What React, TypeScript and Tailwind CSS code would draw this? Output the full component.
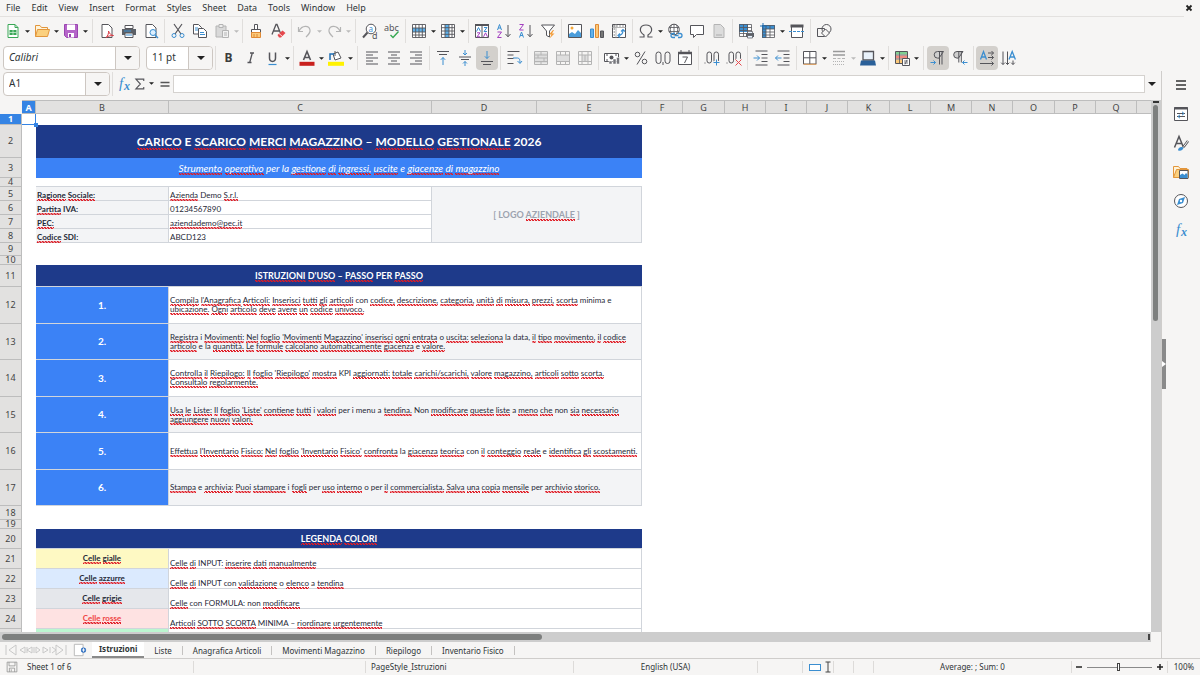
import { useState } from 'react'
import type { ReactNode } from 'react'

const menus = ['File', 'Edit', 'View', 'Insert', 'Format', 'Styles', 'Sheet', 'Data', 'Tools', 'Window', 'Help']
const sheets = ['Istruzioni', 'Liste', 'Anagrafica Articoli', 'Movimenti Magazzino', 'Riepilogo', 'Inventario Fisico']
const columns = 'ABCDEFGHIJKLMNOPQ'.split('')
const colWidths = [
  'w-[22px]', 'w-[14px]', 'w-[133px]', 'w-[263px]', 'w-[105px]', 'w-[105px]',
  'w-[41px]', 'w-[42px]', 'w-[41px]', 'w-[41px]', 'w-[41px]', 'w-[42px]',
  'w-[41px]', 'w-[41px]', 'w-[41px]', 'w-[42px]', 'w-[41px]', 'w-[41px]',
]

const K = '#55555a'
const B = '#3b8ed0'
const G = '#b4b4b4'

const sheetPage = <path d="M3 1.500h6.500l3.500 3.500v9.500h-10z" fill="#fff" stroke={K} />
const lines = (ys: number[], xs: [number, number][]) => (
  <path d={ys.map((y, i) => `M${xs[i % xs.length][0]} ${y}H${xs[i % xs.length][1]}`).join('')} stroke={K} />
)

// 16x16 toolbar glyphs
const icons: Record<string, ReactNode> = {
  new: <><path d="M3 1.500h7l3 3v10h-10z" fill="#fff" stroke="#3aa757" /><path d="M10 1.500v3h3" stroke="#3aa757" /><path d="M4.500 7h7v5h-7z" fill="#3aa757" /><path d="M4.500 9.500h7M8 7v5" stroke="#d8f3df" strokeWidth=".7" /></>,
  open: <><path d="M1.500 13.500v-11h4.500l1.500 2h6v3" fill="#fff3d8" stroke="#e2963c" /><path d="M1.500 13.500l2-7h12l-2 7z" fill="#fbd07e" stroke="#e2963c" /></>,
  save: <><path d="M1.500 1.500h13v13h-11l-2-2z" fill="#b565c9" stroke="#9a44b0" /><path d="M4 1.500h8v5.500h-8z" fill="#fff" /><path d="M5 10h6v4.500h-6z" fill="#fff" /><path d="M6 11h2v3h-2z" fill="#9a44b0" /></>,
  pdf: <>{sheetPage}<path d="M7 14.500c1.500-1 3-4.500 2.500-6.500c1 3 3 4.500 5 4.500c-3 0-5.500.500-7.500 2z" fill="#fff" stroke="#d93a44" /></>,
  print: <><path d="M4 2.500h8v3h-8z" fill="#fff" stroke={K} /><path d="M1 6h14v6h-14z" fill="#5b6067" /><path d="M4 10h8v4.500h-8z" fill="#fff" stroke={K} /><path d="M5 12h6" stroke={B} /><path d="M3 8h7" stroke={B} /></>,
  preview: <>{sheetPage}<circle cx="10" cy="9.500" r="3" fill="#dcefff" stroke={B} /><path d="M12 12l3 3" stroke={B} strokeWidth="1.500" /></>,
  cut: <><path d="M4 1l7 10M12 1l-7 10" stroke={K} strokeWidth="1.200" /><circle cx="4" cy="12.500" r="2" stroke={B} /><circle cx="12" cy="12.500" r="2" stroke={B} /></>,
  copy: <><path d="M1.500 1.500h5l3 3v6.500h-8z" fill="#fff" stroke={K} /><path d="M6.500 5.500h5l3 3v6h-8z" fill="#fff" stroke={K} /><path d="M3 5h3M3 7h3M8 9.500h4M8 11.500h5" stroke={B} /></>,
  paste: <><path d="M2 3h10v11h-10z" fill="#d9d9d9" stroke={G} /><path d="M5 1.500h4v3h-4z" fill="#eee" stroke={G} /><path d="M8.500 7.500h6v7h-6z" fill="#f2f2f2" stroke={G} /><path d="M10 10h3M10 12h3" stroke={G} /></>,
  clone: <><path d="M6.500 1.500h3v5h-3z" fill="#fff" stroke={K} /><path d="M3.500 6.500h9v3h-9z" fill="#fff" stroke={K} /><path d="M3.500 9.500h9v5h-9z" fill="#fbc97a" stroke="#e08a35" /><path d="M6 11v3M9 11v3" stroke="#e08a35" /></>,
  clear: <><path d="M2 11.500l4-10h1l4 10M3.500 8h6" stroke={K} strokeWidth="1.300" /><path d="M7.500 12l5-4.500l3 2.500l-4.500 4.500h-2z" fill="#e5484d" /><path d="M9 10.500l3.500 3" stroke="#fff" strokeWidth=".8" /></>,
  undo: <><path d="M1.500 4v4.500h4.500M2 8c3-6 10-6 11-1c.600 3-2 5-4 7" stroke={G} strokeWidth="1.200" /></>,
  redo: <><path d="M14.500 4v4.500h-4.500M14 8c-3-6-10-6-11-1c-.600 3 2 5 4 7" stroke={G} strokeWidth="1.200" /></>,
  find: <><circle cx="9" cy="6" r="4.800" fill="#fff" stroke={K} /><path d="M5.500 9.500l-4.500 5" stroke={K} strokeWidth="2" /><text x="6.500" y="8.500" fontSize="8" fill={B} fontFamily="Noto Sans">a</text><text x="10" y="15.500" fontSize="9" fill={K} fontFamily="Noto Sans">d</text></>,
  spell: <><text x="0" y="7.500" fontSize="9" fill={K} fontFamily="Noto Sans">abc</text><path d="M6.500 12l2.500 2.500l5.500-6" stroke="#36a852" strokeWidth="1.400" /></>,
  row: <><path d="M1.500 1.500h13v13h-13z" fill="#fff" /><path d="M1 5h14v4h-14z" fill="#5eb0ea" /><path d="M1.500 1.500h13v13h-13zM4.700 1.500v13M8 1.500v13M11.300 1.500v13M1.500 5h13M1.500 9h13M1.500 12h13" stroke={K} strokeWidth=".9" /></>,
  col: <><path d="M1.500 1.500h13v13h-13z" fill="#fff" /><path d="M5 1h4v14h-4z" fill="#5eb0ea" /><path d="M1.500 1.500h13v13h-13zM5 1.500v13M9 1.500v13M12 1.500v13M1.500 4.700h13M1.500 8h13M1.500 11.300h13" stroke={K} strokeWidth=".9" /></>,
  sort: <><path d="M1.500 1.500h13v13h-13z" fill="#fff" stroke={K} /><path d="M1 2h14" stroke={K} strokeWidth="2" /><path d="M8 2v12.500" stroke={K} /><path d="M2.500 8.500l2-4l2 4M10 4.500h3l-3 4h3" stroke={B} /><path d="M3 9.800h3l-3 4h3M9.500 13.800l2-4l2 4" stroke="#a33fc0" /></>,
  az: <><path d="M1.500 7l2-5.500l2 5.500M2 5h3" stroke={B} /><path d="M1.500 9h4l-4 5.500h4" stroke="#a33fc0" /><path d="M12 2v11.500M9.500 11l2.500 2.800l2.500-2.800" stroke={K} /></>,
  za: <><path d="M1.500 1.500h4l-4 5.500h4" stroke="#a33fc0" /><path d="M1.500 14.500l2-5.500l2 5.500M2 12.500h3" stroke={B} /><path d="M12 2v11.500M9.500 11l2.500 2.800l2.500-2.800" stroke={K} /></>,
  filter: <><path d="M1.500 2h13l-5 6v6l-3-1.500v-4.500z" fill="#fff" stroke={K} /><path d="M13 7l-4 4.500h2.500l-2 4l5-5h-2.500l2-3.500z" fill="#f39b36" /></>,
  image: <><path d="M1.500 1.500h13v13h-13z" fill="#fff" stroke={K} /><circle cx="5" cy="5" r="1.500" fill="#f3a73b" /><path d="M2 14v-3l3-2l3 2l3-4l3 3v4z" fill="#4a9ddb" /></>,
  chart: <><path d="M1.500 6h3v8.500h-3z" fill="#64b2ea" stroke={B} /><path d="M6.500 1.500h3v13h-3z" fill="#fbc97a" stroke="#e08a35" /><path d="M11.500 8h3v6.500h-3z" fill="#777" stroke={K} /></>,
  pivot: <><path d="M1.500 1.500h13v13h-13z" fill="#fff" stroke={K} /><path d="M1.500 4.500h13M5 1.500v13" stroke={G} /><path d="M2 3h12M3.200 2v12" stroke="#999" strokeDasharray="2 1" /><path d="M7 12.500c3 0 5-2 5-5.500M10 8.500l2-2l2 2M9 10.500l-2 2l2 2" stroke={B} strokeWidth="1.200" /></>,
  omega: <path d="M1.500 14h4.500v-2c-6-4-4-10 2-10s8 6 2 10v2h4.500" stroke={K} strokeWidth="1.200" />,
  link: <><circle cx="7" cy="6.500" r="5.300" fill="#fff" stroke={K} /><path d="M2 4.500h10M2 8.500h10M7 1v10M4.500 2c-1.500 3-1.500 6 0 9M9.500 2c1.500 3 1.500 6 0 9" stroke={K} strokeWidth=".8" /><path d="M8 10.500h-2a2 2 0 000 4h2M11 10.500h2a2 2 0 010 4h-2M7.500 12.500h4" stroke={B} strokeWidth="1.300" /></>,
  comment: <path d="M1.500 2.500h13v9h-7l-3 3v-3h-3z" fill="#fff" stroke={K} />,
  header: <><path d="M3 1.500h6.500l3.500 3.500v9.500h-10z" fill="#dcdcdc" stroke={G} /><path d="M5 11h6v2h-6z" fill="#c4c4c4" /></>,
  printArea: <><path d="M1.500 1.500h12v11h-12z" fill="#fff" /><path d="M1 1h9v8h-9z" fill={B} /><path d="M1.500 1.500h12v12h-12zM1.500 4.500h12M1.500 7.500h12M1.500 10.500h12M5.500 1.500v12M9.500 1.500v12" stroke={K} strokeWidth=".8" /><path d="M8 10h8v4h-8z" fill="#5b6067" /><path d="M9.500 8.500h5v2h-5zM9.500 12.500h5v2.500h-5z" fill="#e8f4ff" stroke={K} strokeWidth=".7" /></>,
  freeze: <><path d="M2.500 2.500h12v12h-12z" fill="#fff" /><path d="M2 2h13v4h-13zM2 2h4v13h-4z" fill={B} /><path d="M2.500 2.500h12v12h-12zM2.500 6h12M2.500 9h12M2.500 12h12M6 2.500v12M10 2.500v12" stroke={K} strokeWidth=".8" /><path d="M3 0v7M0 3h7" stroke="#1f6fb5" /></>,
  split: <><path d="M2.500 2.500h11v12h-11z" fill="#fff" stroke={K} /><path d="M1.500 3h13" stroke={K} strokeWidth="3" /><path d="M0 8.500h16" stroke={B} strokeDasharray="3 1" /></>,
  shapes: <><path d="M1.500 5.500h7v8h-7z" stroke={K} /><circle cx="10.500" cy="6" r="4.500" stroke={K} /><path d="M9.500 6l4 4l-4 4l-4-4z" fill="#f6f5f4" stroke={K} /></>,
  bold: <text x="3.500" y="12" fontSize="12" fontWeight="700" fill="#3c3c3c" fontFamily="Noto Sans">B</text>,
  italic: <path d="M7 3h4M4.500 12.500h4M9.300 3l-2.600 9.500" stroke={K} strokeWidth="1.300" />,
  underline: <><path d="M4.500 2.500v5.500c0 4.500 6 4.500 6 0v-5.500" stroke={K} strokeWidth="1.500" /><path d="M3.500 14.500h8" stroke={B} strokeWidth="1.200" /></>,
  fontColor: <><path d="M4.500 10l3.500-8.500l3.500 8.500M5.500 7.500h5" stroke={K} strokeWidth="1.600" /><path d="M.500 11.800h15v4h-15z" fill="#c9211e" /></>,
  highlight: <><path d="M5 4l5-2l3 6l-6 2z" fill="#fff" stroke={K} /><path d="M7 1v5" stroke={K} /><path d="M2 10v-6h4" stroke="#1f6fb5" strokeWidth="1.500" /><path d="M0 11.800h16v4h-16z" fill="#fff200" /></>,
  left: lines([2, 5, 8, 11, 14], [[2, 14], [2, 9]]),
  center: lines([2, 5, 8, 11, 14], [[2, 14], [5, 11]]),
  right: lines([2, 5, 8, 11, 14], [[2, 14], [7, 14]]),
  top: <>{lines([1.5, 4.5], [[2, 14], [4, 12]])}<path d="M8 15v-7.500M5.800 9.800l2.200-2.300l2.200 2.300" stroke={B} /></>,
  middle: <>{lines([7, 9.5], [[2, 14], [4, 12]])}<path d="M8 0v4.500M6 3l2 2l2-2M8 16v-4.500M6 13.500l2-2l2 2" stroke={B} /></>,
  bottom: <>{lines([11.5, 14.5], [[2, 14], [4, 12]])}<path d="M8 1v7.500M5.800 6.300l2.200 2.200l2.200-2.200" stroke={B} /></>,
  wrap: <><path d="M1.500 1.500h12M1.500 5h6M1.500 8.500h6M1.500 13.500h6" stroke={K} /><path d="M7 8h4.500c2 0 2.500 1.500 2.500 5M11.500 11l2.500 2.500l2-2.500" stroke={B} /></>,
  merge1: <><path d="M1.500 2.500h13v11h-13z" fill="#dedede" /><path d="M1.500 1.500h13v13h-13zM1.500 5h13M1.500 8h13M1.500 11.500h13M8 1.500v3.500M8 11.500v3M5 5v3M11 8v3" stroke={G} /></>,
  merge2: <><path d="M1.500 5h13v6.500h-13z" fill="#dedede" /><path d="M1.500 1.500h13v13h-13zM1.500 5h13M1.500 11.500h13M5.500 1.500v3.500M10.500 1.500v3.500M5.500 11.500v3M10.500 11.500v3" stroke={G} /></>,
  merge3: <><path d="M5 5h6v6.500h-6z" fill="#dedede" /><path d="M1.500 1.500h13v13h-13zM1.500 5h13M1.500 11.500h13M5 1.500v13M11 1.500v13M8 5v6.500" stroke={G} /></>,
  currency: <><path d="M.500 3.500h14v8h-14z" fill="#fff" stroke={K} /><circle cx="7.500" cy="7.500" r="2" fill={K} /><path d="M2 5h2M11 5h2M2 10h2" stroke={K} /><path d="M5 11h3v3h-3zM9 9h3v5h-3zM12.500 7.500h3v6.500h-3z" fill="#77777c" stroke="#fff" strokeWidth=".5" /></>,
  percent: <><circle cx="4.500" cy="4.500" r="2.300" stroke={K} /><circle cx="11.500" cy="11.500" r="2.300" stroke={K} /><path d="M12 1.500l-8 13" stroke={K} /></>,
  number: <><rect x="1" y="2" width="5" height="11.500" rx="2.500" stroke={K} /><rect x="10" y="2" width="5" height="11.500" rx="2.500" stroke={K} /><path d="M8 12v3" stroke={K} /></>,
  date: <><path d="M1.500 3h13v11.500h-13z" fill="#fff" stroke={K} /><path d="M1 3h14" stroke={K} strokeWidth="2.500" /><path d="M4 0v3M12 0v3" stroke={K} /><path d="M5.500 7h5l-3 6" stroke={K} /></>,
  addDec: <><path d="M.500 13h1" stroke={K} /><rect x="3" y="2" width="4.500" height="11" rx="2.200" stroke={K} /><rect x="10" y="2" width="4.500" height="11" rx="2.200" stroke={K} /><path d="M9.500 12.500h6M12.500 9.500v6" stroke="#f6f5f4" strokeWidth="3" /><path d="M9.500 12.500h6M12.500 9.500v6" stroke={B} /></>,
  delDec: <><path d="M.500 13h1" stroke={K} /><rect x="3" y="2" width="4.500" height="11" rx="2.200" stroke={K} /><rect x="10" y="2" width="4.500" height="11" rx="2.200" stroke={K} /><path d="M9.500 9.500l6 6M15.500 9.500l-6 6" stroke="#f6f5f4" strokeWidth="3" /><path d="M9.500 9.500l6 6M15.500 9.500l-6 6" stroke="#e5484d" /></>,
  indent: <><path d="M2.500 1h12M8.500 4.500h6M8.500 8h6M8.500 11.500h6M2.500 15h12" stroke={K} /><path d="M.500 8h6M4 5.500l2.500 2.500l-2.500 2.500" stroke={B} /></>,
  outdent: <><path d="M2.500 1h12M8.500 4.500h6M8.500 8h6M8.500 11.500h6M2.500 15h12" stroke={K} /><path d="M.500 8h6M3 5.500l-2.500 2.500l2.500 2.500" stroke={B} /></>,
  borders: <><path d="M1.500 1.500h12.500v12.500h-12.500zM7.800 1.500v12.500M1.500 7.800h12.500" fill="#fff" stroke={K} /><path d="M1.500 14.300h13" stroke="#e5a25c" /></>,
  lineStyle: <><path d="M2 1.500h12M2 5h12" stroke="#999" strokeWidth="1.600" /><path d="M2 8.500h12" stroke={G} strokeDasharray="3 1.500" /><path d="M2 11.500h12M2 14.500h12" stroke={G} strokeDasharray="1 1" /></>,
  lineColor: <><path d="M3 1.500h10.500v8.500h-10.500z" fill="#e8f1fa" stroke={K} strokeWidth="1.300" /><path d="M1 10.500h14l1 5h-16z" fill="#2a6099" /></>,
  conditional: <><path d="M1.500 1.500h12v12h-12z" fill="#fff" stroke={K} /><path d="M2 2h11v2.500h-11z" fill="#7fcf92" /><path d="M2 5.500h11v3h-11z" fill="#f08a80" /><path d="M2 9.500h6v3.500h-6z" fill="#fbc97a" /><path d="M5.500 1.500v12M1.500 5h12M1.500 9h12" stroke={K} strokeWidth=".8" /><path d="M8.500 8.500h7v7h-7z" fill="#fff" stroke={K} /><path d="M10 11h4M10 13h4M13 9.800l-2 4.600" stroke={K} strokeWidth=".8" /></>,
  ltr: <><path d="M13.500 1.500h-6a3.300 3.300 0 000 6.600h1.500zM9.500 1.500v13M12 1.500v13" fill="#cfcfcf" stroke={K} /><path d="M.500 12.500h5M3.500 10.500l2 2l-2 2" stroke={B} /></>,
  rtl: <><path d="M11 1.500h-6a3.300 3.300 0 000 6.600h1.500zM6.800 1.500v11M9.300 1.500v11" fill="#cfcfcf" stroke={K} /><path d="M15.500 12.500h-5M12.500 10.500l-2 2l2 2" stroke={B} /></>,
  textH: <><path d="M1.500 9.500l3-8l3 8M2.500 7h4" stroke={B} strokeWidth="1.300" /><path d="M9 3h5.500M12.500 1l2 2l-2 2M9 7.500h5.500M12.500 5.500l2 2l-2 2M1 13.500h13.500M12.500 11.500l2 2l-2 2" stroke={K} /></>,
  textV: <><path d="M8 9.500l3.200-8l3.200 8M9 7h4.500" stroke={B} strokeWidth="1.300" /><path d="M2 1.500v13M.200 12.700l1.800 1.800l1.800-1.800M6.500 1.500v13M4.700 12.700l1.800 1.800l1.800-1.800M12 10.500v4M10.200 12.700l1.800 1.800l1.800-1.800" stroke={K} /></>,
  sigma: <path d="M13 4v-2.500h-10.500l6 6.500l-6 6.500h10.500v-2.500" stroke={K} strokeWidth="1.500" />,
  equals: <path d="M2 6h12M2 10.500h12" stroke="#555" strokeWidth="2" />,
  fx: <><text x="3" y="12" fontSize="15" fontStyle="italic" fill={B} fontFamily="Liberation Serif">f</text><text x="8" y="14" fontSize="12" fontStyle="italic" fontWeight="700" fill={B} fontFamily="Liberation Serif">x</text></>,
  burger: <path d="M3 4h10M3 8h10M3 12h10" stroke="#333" strokeWidth="1.500" />,
  properties: <><path d="M1.500 1.500h13v13h-13z" fill="#fff" stroke={K} /><path d="M1 2.500h14" stroke={K} strokeWidth="2" /><path d="M4 7.500h8M4 10.500h8" stroke={K} /><path d="M9 5.800l2 1.700l-2 1.700M7 8.800l-2 1.700l2 1.700" stroke={B} /></>,
  styles: <><path d="M1.500 12.500l4.500-11l4.500 11M3.200 8.500h5.500" stroke={K} strokeWidth="1.500" /><path d="M15 6l-4.500 6" stroke={K} strokeWidth="2.500" /><path d="M14.800 6.200l-4 5.400" stroke="#fff" strokeWidth="1" /><path d="M5 15.500c0-3 3-4.500 5.500-3c0 2.500-2.500 3.500-5.500 3z" fill={B} /></>,
  gallery: <><path d="M.500 13.500v-11h5l1.500 2h7v3" fill="#fff3d8" stroke="#e2963c" /><path d="M.500 13.500l3-8h12v8z" fill="#fbd07e" stroke="#e2963c" /><path d="M6.500 6.500h8.500v8h-8.500z" fill="#fff" stroke={K} /><path d="M7 14v-3l2.500-1.500l2 1.500l1.500-2l1.500 1.500v3.500z" fill={B} /></>,
  navigator: <><circle cx="8" cy="8" r="6.500" fill="#fff" stroke={K} /><path d="M12 4l-2 6l-6 2l2-6z" fill={B} /><circle cx="8" cy="8" r="1.200" fill="#fff" /></>,
}

const Icon = ({ name, small }: { name: string; small?: boolean }) => (
  <svg viewBox="0 0 16 16" fill="none" className={small ? 'h-3 w-3' : 'h-4 w-4 overflow-visible'} aria-hidden="true">{icons[name]}</svg>
)

const Tool = ({ name, active }: { name: string; active?: boolean }) => (
  <button aria-label={name} className={`flex h-6 w-[22px] shrink-0 items-center justify-center rounded-sm ${active ? 'bg-[#d3d0cc]' : ''}`}>
    <Icon name={name} />
  </button>
)

const Caret = ({ faded, big }: { faded?: boolean; big?: boolean }) => (
  <svg viewBox="0 0 8 4" className={`${big ? 'h-1 w-2' : 'h-[3px] w-[5px]'} ${faded ? 'text-[#bbb]' : 'text-[#222]'}`} aria-hidden="true">
    <path d="M0 0h8l-4 4z" fill="currentColor" />
  </svg>
)

const Sep = ({ wide }: { wide?: boolean }) => (
  <span className={`flex h-6 shrink-0 justify-center ${wide ? 'w-[7px]' : 'w-[5px]'}`}><span className="w-px bg-[#e0dedc]" /></span>
)

// "name" = button, "v" = caret, "x" = faded caret, "|" and "||" = separators, "!name" = pressed button
function Tools({ items }: { items: string }) {
  return items.split(' ').map((item, i) => {
    if (item === '|') return <Sep key={i} />
    if (item === '||') return <Sep key={i} wide />
    if (item === 'v' || item === 'x') {
      return (
        <button key={i} aria-label="More" className="flex h-6 w-[7px] shrink-0 items-center justify-center pt-0.5">
          <Caret faded={item === 'x'} />
        </button>
      )
    }
    return <Tool key={i} name={item.replace('!', '')} active={item[0] === '!'} />
  })
}

function Combo({ label, value, width, italic }: { label: string; value: string; width: string; italic?: boolean }) {
  return (
    <div className={`flex h-6 shrink-0 overflow-hidden rounded border border-[#cdc7c2] bg-white ${width}`}>
      <input aria-label={label} defaultValue={value} className={`min-w-0 flex-1 px-[5px] text-[10px] text-[#2e3436] outline-none ${italic ? 'italic' : ''}`} />
      <button aria-label={`${label} list`} className="flex w-6 items-center justify-center border-l border-[#cdc7c2] bg-[#f6f5f4]"><Caret big /></button>
    </div>
  )
}

// Words the English dictionary accepts; everything else gets the red wave
const known = new Set('e i la con minima per demo iva sdi logo formula input non a o data kpi menu abcd123'.split(' '))

function Spell({ text }: { text: string }) {
  return text.split(' ').map((word, i) => {
    const bare = word.replace(/[.,:]/g, '').toLowerCase()
    const ok = known.has(bare) || !/[a-z]/.test(bare)
    return (
      <span key={i}>
        {i > 0 && ' '}
        {ok ? word : <span className="bg-[linear-gradient(45deg,transparent_30%,#e01b24_30%,#e01b24_70%,transparent_70%)] bg-[length:3px_2px] bg-bottom bg-repeat-x pb-px">{word}</span>}
      </span>
    )
  })
}

const steps: [string, string?][] = [
  ["Compila l'Anagrafica Articoli: Inserisci tutti gli articoli con codice, descrizione, categoria, unità di misura, prezzi, scorta minima e", 'ubicazione. Ogni articolo deve avere un codice univoco.'],
  ["Registra i Movimenti: Nel foglio 'Movimenti Magazzino' inserisci ogni entrata o uscita: seleziona la data, il tipo movimento, il codice", 'articolo e la quantità. Le formule calcolano automaticamente giacenza e valore.'],
  ["Controlla il Riepilogo: Il foglio 'Riepilogo' mostra KPI aggiornati: totale carichi/scarichi, valore magazzino, articoli sotto scorta.", 'Consultalo regolarmente.'],
  ["Usa le Liste: Il foglio 'Liste' contiene tutti i valori per i menu a tendina. Non modificare queste liste a meno che non sia necessario", 'aggiungere nuovi valori.'],
  ["Effettua l'Inventario Fisico: Nel foglio 'Inventario Fisico' confronta la giacenza teorica con il conteggio reale e identifica gli scostamenti."],
  ['Stampa e archivia: Puoi stampare i fogli per uso interno o per il commercialista. Salva una copia mensile per archivio storico.'],
]

const company = [
  ['Ragione Sociale:', 'Azienda Demo S.r.l.'],
  ['Partita IVA:', '01234567890'],
  ['PEC:', 'aziendademo@pec.it'],
  ['Codice SDI:', 'ABCD123'],
]

const legend = [
  ['Celle gialle', 'Celle di INPUT: inserire dati manualmente', 'bg-[#fef9c3]'],
  ['Celle azzurre', 'Celle di INPUT con validazione o elenco a tendina', 'bg-[#dbeafe]'],
  ['Celle grigie', 'Celle con FORMULA: non modificare', 'bg-[#e5e7eb]'],
  ['Celle rosse', 'Articoli SOTTO SCORTA MINIMA – riordinare urgentemente', 'bg-[#fee2e2] text-[#ef4444]'],
]

function Row({ n, h, children }: { n: number; h: string; children?: ReactNode }) {
  return (
    <tr>
      <th scope="row" className="p-0 font-['Noto_Sans',sans-serif]">
        <div className={`flex items-center justify-center border-r border-b border-[#bdbdbd] text-[9px] leading-[8px] ${h} ${n === 1 ? 'bg-[#3584e4] font-bold text-white' : 'bg-[#e2e1e0] font-normal text-[#444]'}`}>{n < 25 && n}</div>
      </th>
      {n === 1 ? (
        <td className="relative p-0">
          <span className="absolute inset-0 border-r border-b border-[#3584e4]" />
          <span className="absolute -right-0.5 -bottom-0.5 z-10 h-1 w-1 bg-[#3584e4]" />
        </td>
      ) : <td className="p-0" />}
      {children}
    </tr>
  )
}

const line = 'border-b border-r border-[#d1d5db]'

function Grid() {
  return (
    <table className="w-full table-fixed border-separate border-spacing-0 font-['Lato',sans-serif] text-[8px] leading-[9px] whitespace-nowrap text-[#1f2937]">
      <colgroup>{colWidths.map((w, i) => <col key={i} className={w} />)}<col /></colgroup>
      <thead className="font-['Noto_Sans',sans-serif] text-[9px]">
        <tr>
          <td className="h-[14px] bg-[#f6f5f4] p-0" />
          {columns.map((c) => (
            <th key={c} scope="col" className={`h-[14px] border-t border-r border-b border-[#bdbdbd] p-0 ${c === 'A' ? 'bg-[#3584e4] font-bold text-white' : 'bg-[#e2e1e0] font-normal text-[#444]'}`}>{c}</th>
          ))}
          <td className="border-t border-b border-[#bdbdbd] bg-[#e2e1e0] p-0" />
        </tr>
      </thead>
      <tbody>
        <Row n={1} h="h-[11px]" />
        <Row n={2} h="h-[33px]">
          <td colSpan={4} className="bg-[#1e3a8a] p-0 text-center text-xs font-bold text-white"><Spell text="CARICO E SCARICO MERCI MAGAZZINO – MODELLO GESTIONALE 2026" /></td>
        </Row>
        <Row n={3} h="h-5">
          <td colSpan={4} className="bg-[#3b82f6] p-0 text-center text-[10px] leading-3 text-white italic"><Spell text="Strumento operativo per la gestione di ingressi, uscite e giacenze di magazzino" /></td>
        </Row>
        <Row n={4} h="h-[9px]"><td colSpan={4} className="border-b border-[#d1d5db] p-0" /></Row>
        {company.map(([k, v], i) => (
          <Row key={k} n={5 + i} h="h-[14px]">
            <td className={`${line} bg-[#f3f4f6] px-px py-0 align-bottom font-bold`}><Spell text={k} /></td>
            <td className={`${line} px-px py-0 align-bottom`}><Spell text={v} /></td>
            {i === 0 && <td rowSpan={4} colSpan={2} className={`${line} bg-[#f3f4f6] p-0 text-center text-[9px] font-bold text-[#9ca3af]`}><Spell text="[ LOGO AZIENDALE ]" /></td>}
          </Row>
        ))}
        <Row n={9} h="h-[13px]" />
        <Row n={10} h="h-[9px]" />
        <Row n={11} h="h-[22px]">
          <td colSpan={4} className="border-b border-[#d1d5db] bg-[#1e3a8a] p-0 text-center text-[9px] font-bold text-white"><Spell text="ISTRUZIONI D'USO – PASSO PER PASSO" /></td>
        </Row>
        {steps.map(([a, b], i) => (
          <Row key={i} n={12 + i} h={i % 2 ? 'h-9' : 'h-[37px]'}>
            <td className={`${line} bg-[#3b82f6] p-0 text-center text-[10px] font-bold text-white`}>{i + 1}.</td>
            <td colSpan={3} className={`${line} px-px py-0 ${i % 2 ? 'bg-[#f3f4f6]' : ''}`}>
              <Spell text={a} />
              {b && <><br /><Spell text={b} /></>}
            </td>
          </Row>
        ))}
        <Row n={18} h="h-[14px]" />
        <Row n={19} h="h-[9px]" />
        <Row n={20} h="h-5">
          <td colSpan={4} className="border-b border-[#d1d5db] bg-[#1e3a8a] p-0 text-center text-[9px] font-bold text-white"><Spell text="LEGENDA COLORI" /></td>
        </Row>
        {legend.map(([k, v, tone], i) => (
          <Row key={i} n={21 + i} h="h-5">
            <td className={`${line} p-0 text-center font-bold ${tone}`}><Spell text={k} /></td>
            <td colSpan={3} className={`${line} px-px py-0 align-bottom`}><Spell text={v} /></td>
          </Row>
        ))}
        <Row n={25} h="h-5">
          <td className={`${line} bg-[#bbf7d0] p-0`} />
          <td colSpan={3} className={`${line} p-0`} />
        </Row>
      </tbody>
    </table>
  )
}

const statusCell = 'flex h-3 shrink-0 items-center border-r border-[#dddbd9]'

export default function App() {
  const [sheet, setSheet] = useState('Istruzioni')

  return (
    <div className="flex h-screen flex-col overflow-hidden bg-[#f6f5f4] font-['Noto_Sans',sans-serif] text-[8px] text-[#2e3436]">
      <header className="shrink-0">
        <div className="mr-4 flex h-[17px] items-center gap-[11px] border-b border-[#e3e1df] pl-[6px] text-[9px]">
          {menus.map((m) => <button key={m}>{m}</button>)}
          <button aria-label="Close" className="absolute right-[7px]">
            <svg viewBox="0 0 8 8" className="h-2 w-2"><path d="M1.500 1.500l5 5M6.500 1.500l-5 5" stroke="#222" strokeWidth="1.800" /></svg>
          </button>
        </div>
        <div className="flex h-[27px] items-center pl-0.5">
          <Tools items="new v open v save v || pdf print preview | cut copy paste x | clone clear | undo x redo x || find spell | row v col v | sort az za filter | image chart pivot | omega v link comment header | printArea freeze v split | shapes" />
        </div>
        <div className="flex h-[27px] items-center pl-[3px]">
          <Combo label="Font name" value="Calibri" width="w-[137px]" italic />
          <span className="w-[6px]" />
          <Combo label="Font size" value="11 pt" width="w-[67px]" />
          <Tools items="| bold italic underline v | fontColor v highlight v || left center right | top middle !bottom | wrap | merge1 merge2 merge3 | currency v percent number date | addDec delDec | indent outdent | borders v lineStyle x lineColor v | conditional v || !ltr rtl | !textH textV" />
        </div>
      </header>

      <div className="flex min-h-0 flex-1">
        <main className="flex min-w-0 flex-1 flex-col">
          <div className="flex h-[29px] shrink-0 items-center pr-[5px] pb-1 pl-[3px]">
            <Combo label="Name box" value="A1" width="w-[107px]" />
            <Sep />
            <button aria-label="Function wizard" className="flex w-[18px] justify-center"><Icon name="fx" /></button>
            <button aria-label="Select function" className="flex w-[14px] justify-center"><Icon name="sigma" small /></button>
            <button aria-label="More functions" className="flex w-[9px] justify-center"><Caret /></button>
            <button aria-label="Formula" className="flex w-[17px] justify-center"><Icon name="equals" small /></button>
            <input aria-label="Formula input" className="h-[18px] min-w-0 flex-1 border border-[#d5d2cf] bg-white px-1" />
            <button aria-label="Expand formula bar" className="flex w-[11px] justify-end"><Caret big /></button>
          </div>

          <div className="flex min-h-0 flex-1">
            <div className="min-w-0 flex-1 overflow-hidden bg-white"><Grid /></div>
            <div className="w-[10px] shrink-0 bg-[#cdcdcd] px-0.5">
              <div className="mt-px h-0.5 bg-[#333]" />
              <div className="mt-0.5 h-[216px] w-[5px] rounded-full bg-[#7d7f7e]" />
            </div>
          </div>
          <div className="mr-[10px] flex h-[10px] shrink-0 items-center justify-between bg-[#cdcdcd] pl-0.5">
            <div className="h-1.5 w-[47%] rounded-full bg-[#7d7f7e]" />
            <div className="mr-px h-1.5 w-0.5 bg-[#444]" />
          </div>
          <nav className="flex h-4 shrink-0 items-center">
            <svg viewBox="0 0 62 12" fill="none" stroke="#c8c8c8" className="ml-[5px] h-3 w-[62px]">
              <path d="M1 1v10M11 1l-7 5l7 5zM20 3l-5 3l5 3zM27 3l-5 3l5 3zM29 3v6M31 3l4 3l-4 3zM38 3l5 3l-5 3zM45 3v6M51 1l7 5l-7 5zM61 1v10M22 3v6M47 3l4 3l-4 3" />
            </svg>
            <button aria-label="Add sheet" className="flex w-[25px] items-center justify-center">
              <svg viewBox="0 0 16 16" fill="none" className="h-3.5 w-3.5"><path d="M1.500 1.500h10v13h-10z" fill="#fff" stroke={G} /><circle cx="12" cy="8" r="3" fill="#2f6fc0" /><path d="M10 8h4M12 6v4" stroke="#fff" /></svg>
            </button>
            {sheets.map((s) => (
              <button key={s} onClick={() => setSheet(s)} className={s === sheet
                ? 'h-4 border-b-2 border-[#8a8a8a] bg-white px-[7px] font-bold'
                : 'flex h-4 items-center'}>
                {s === sheet ? s : <span className="border-r border-[#c4c2c0] px-[10px] leading-[9px]">{s}</span>}
              </button>
            ))}
          </nav>
        </main>

        <aside className="relative flex w-[39px] shrink-0 flex-col items-center gap-[13px] border-l border-[#cfcdcb] pt-[6px]">
          <button aria-label="Hide sidebar" className="absolute top-[268px] left-0 flex h-[50px] w-1 items-center justify-center bg-[#8a8a8a]">
            <svg viewBox="0 0 4 6" className="h-1.5 w-1"><path d="M0 0l4 3l-4 3z" fill="#fff" /></svg>
          </button>
          {['burger', 'properties', 'styles', 'gallery', 'navigator', 'fx'].map((n) => (
            <button key={n} aria-label={n} className="flex h-4 w-6 items-center justify-center"><Icon name={n} /></button>
          ))}
        </aside>
      </div>

      <footer className="flex h-[17px] shrink-0 items-center border-t border-[#cfcdcb]">
        <div className={`${statusCell} w-[194px] gap-[9px] pl-1.5`}>
          <svg viewBox="0 0 16 16" fill="none" stroke="#8d8d8d" className="h-3 w-3"><path d="M1.500 1.500h13v13h-13zM4 1.500v5h8v-5M4.500 14.500v-5h7v5M7 11v3" /></svg>
          Sheet 1 of 6
        </div>
        <div className={`${statusCell} w-[172px]`} />
        <div className={`${statusCell} w-[208px] pl-[5px]`}>PageStyle_Istruzioni</div>
        <div className={`${statusCell} w-[184px] justify-center`}>English (USA)</div>
        <div className={`${statusCell} w-[45px]`} />
        <div className={`${statusCell} w-[31px] gap-1 pl-1.5`}>
          <span className="h-[7px] w-3 border border-[#3b8ed0] bg-white" />
          <svg viewBox="0 0 6 12" fill="none" stroke="#444" className="h-3 w-1.5"><path d="M.500 1h5M.500 11h5M3 1v10" /></svg>
        </div>
        <div className={`${statusCell} w-5`} />
        <div className={`${statusCell} w-5`} />
        <div className={`${statusCell} flex-1 justify-center`}>Average: ; Sum: 0</div>
        <div className={`${statusCell} w-24 justify-center gap-1`}>
          <button aria-label="Zoom out"><svg viewBox="0 0 8 8" className="h-2 w-2"><path d="M1 4h6" stroke="#222" strokeWidth="1.500" /></svg></button>
          <input type="range" aria-label="Zoom" defaultValue={48} className="h-px w-[65px] appearance-none bg-[#8a8a8a] [&::-webkit-slider-thumb]:h-2 [&::-webkit-slider-thumb]:w-[3px] [&::-webkit-slider-thumb]:appearance-none [&::-webkit-slider-thumb]:border [&::-webkit-slider-thumb]:border-[#444] [&::-webkit-slider-thumb]:bg-white" />
          <button aria-label="Zoom in"><svg viewBox="0 0 8 8" className="h-2 w-2"><path d="M1 4h6M4 1v6" stroke="#222" strokeWidth="1.500" /></svg></button>
        </div>
        <button className="w-8 text-center">100%</button>
      </footer>
    </div>
  )
}
